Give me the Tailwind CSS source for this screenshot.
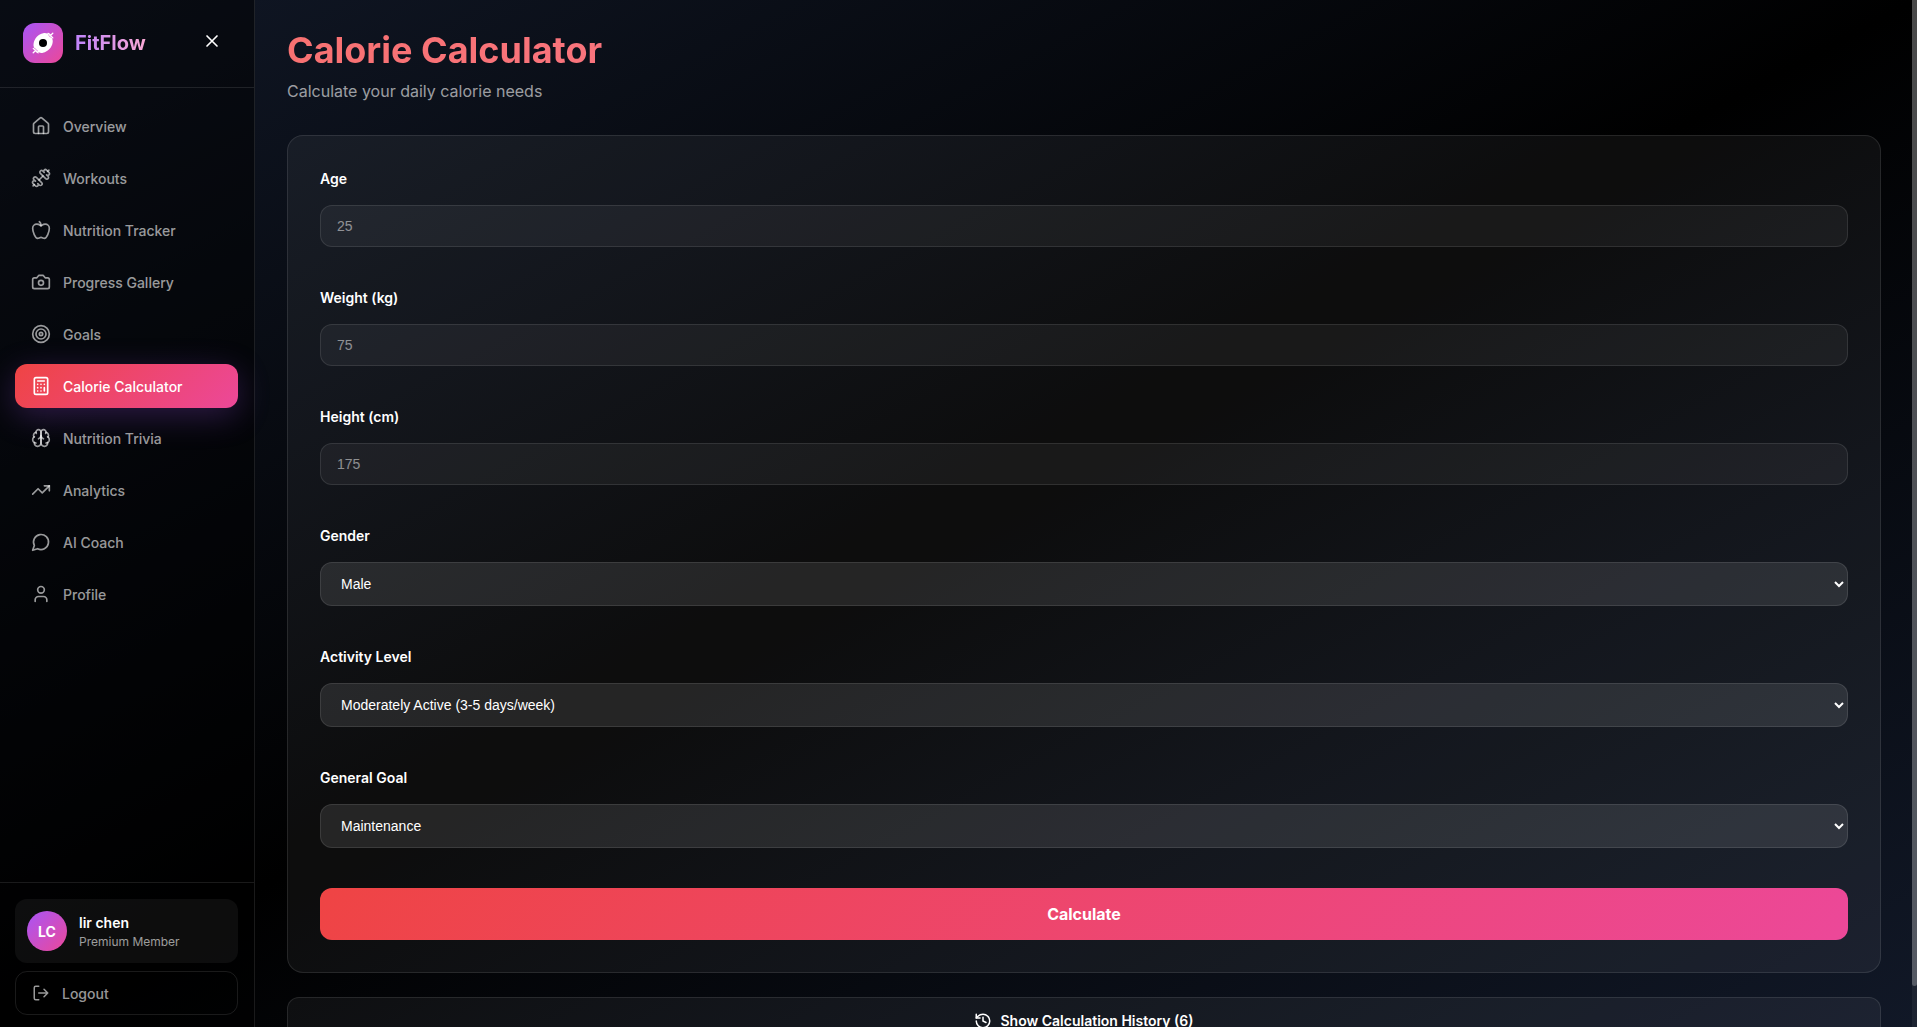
<!DOCTYPE html>
<html lang="en">
<head>
<meta charset="utf-8">
<meta name="viewport" content="width=device-width, initial-scale=1">
<title>FitFlow – Calorie Calculator</title>
<script src="https://cdn.jsdelivr.net/npm/@tailwindcss/browser@4"></script>
</head>
<body class="flex h-screen overflow-hidden bg-black bg-linear-to-br/srgb from-[#111827] via-black to-[#111827] font-[Inter,sans-serif] text-white">

<svg class="hidden" aria-hidden="true">
  <symbol id="dumbbell" viewBox="0 0 24 24"><path d="M17.596 12.768a2 2 0 1 0 2.829-2.829l-1.768-1.767a2 2 0 0 0 2.828-2.829l-2.828-2.828a2 2 0 0 0-2.829 2.828l-1.767-1.768a2 2 0 1 0-2.829 2.829z"/><path d="m2.5 21.5 1.4-1.4"/><path d="m20.1 3.9 1.4-1.4"/><path d="M5.343 21.485a2 2 0 1 0 2.829-2.828l1.767 1.768a2 2 0 1 0 2.829-2.829l-6.364-6.364a2 2 0 1 0-2.829 2.829l1.768 1.767a2 2 0 0 0-2.828 2.829z"/><path d="m9.6 14.4 4.8-4.8"/></symbol>
</svg>

<aside class="flex h-full w-[255px] shrink-0 flex-col border-r border-white/10 bg-black/50">
  <div class="flex items-center border-b border-white/10 py-6 pr-6 pl-[23px] -mt-px">
    <div class="flex size-10 items-center justify-center rounded-xl bg-linear-to-br/srgb from-[#a855f7] to-[#ec4899]">
      <svg class="size-6" viewBox="0 0 24 24" fill="none" stroke="#fff" stroke-width="2" stroke-linecap="round" stroke-linejoin="round" aria-hidden="true">
        <path d="m2.2 21.8 1.6-1.6m16.4-16.4 1.6-1.6M2.300 17.400l1.600 1.400 1.500 1.800 1.700 1.200M17 2.400l1.800 1 1.400 1.700 1.600 1.800" stroke-width="1.3"/>
        <path d="M12.200 2.200c2-.7 4.600 0 6.500 1.900 2.700 2.600 3.500 5.500 2.900 7.700-.7 4.600-4.500 9-9.600 9.900-2 .5-4.900 0-6.700-1.900-2.400-2.400-3.200-5-2.700-7.200C3.300 7.500 7.400 3.100 12.200 2.200Z" fill="#fff" stroke="none"/>
        <path d="m17.600 4.200 2.300 2.300M4.100 17.500l2.300 2.300" stroke="#d14fc4" stroke-width=".7" stroke-dasharray="1 1"/>
        <circle cx="12" cy="12" r="4" fill="#000" stroke="none"/>
      </svg>
    </div>
    <span class="ml-3 bg-linear-to-r/srgb from-[#c084fc] to-[#f9a8d4] bg-clip-text text-xl font-bold text-transparent">FitFlow</span>
    <button type="button" aria-label="Close menu" class="mr-0.5 mb-1 ml-auto flex size-8 items-center justify-center">
      <svg class="size-5" viewBox="0 0 24 24" fill="none" stroke="currentColor" stroke-width="2" stroke-linecap="round"><path d="M18 6 6 18M6 6l12 12"/></svg>
    </button>
  </div>

  <nav class="flex flex-1 flex-col gap-2 py-4 pr-4 pl-[15px] text-sm leading-[21px] font-medium text-white/60 [&_a]:flex [&_a]:h-11 [&_a]:items-center [&_a]:gap-3 [&_a]:rounded-xl [&_a]:px-4 [&_svg]:size-5 [&_svg]:shrink-0 [&_svg]:fill-none [&_svg]:stroke-current [&_svg]:stroke-2 [&_svg]:[stroke-linecap:round] [&_svg]:[stroke-linejoin:round]">
    <a href="#"><svg viewBox="0 0 24 24"><path d="M15 21v-8a1 1 0 0 0-1-1h-4a1 1 0 0 0-1 1v8"/><path d="M3 10a2 2 0 0 1 .709-1.528l7-5.999a2 2 0 0 1 2.582 0l7 5.999A2 2 0 0 1 21 10v9a2 2 0 0 1-2 2H5a2 2 0 0 1-2-2z"/></svg>Overview</a>
    <a href="#"><svg><use href="#dumbbell"/></svg>Workouts</a>
    <a href="#"><svg viewBox="0 0 24 24"><path d="M12 20.94c1.5 0 2.75 1.06 4 1.06 3 0 6-8 6-12.22A4.91 4.91 0 0 0 17 5c-2.22 0-4 1.44-5 2-1-.56-2.78-2-5-2a4.9 4.9 0 0 0-5 4.78C2 14 5 22 8 22c1.250 0 2.500-1.060 4-1.060Z"/><path d="M10 2c1 .5 2 2 2 5"/></svg>Nutrition Tracker</a>
    <a href="#"><svg viewBox="0 0 24 24"><path d="M14.500 4h-5L7 7H4a2 2 0 0 0-2 2v9a2 2 0 0 0 2 2h16a2 2 0 0 0 2-2V9a2 2 0 0 0-2-2h-3l-2.500-3z"/><circle cx="12" cy="13" r="3"/></svg>Progress Gallery</a>
    <a href="#"><svg viewBox="0 0 24 24"><circle cx="12" cy="12" r="10"/><circle cx="12" cy="12" r="6"/><circle cx="12" cy="12" r="2"/></svg>Goals</a>
    <a href="#" aria-current="page" class="bg-linear-135/srgb from-[#ef4444] to-[#ec4899] text-white shadow-[0_8px_32px_rgba(168,85,247,0.25)]"><svg viewBox="0 0 24 24"><rect width="16" height="20" x="4" y="2" rx="2"/><path d="M8 6h8M16 14v4M16 10h.01M12 10h.01M8 10h.01M12 14h.01M8 14h.01M12 18h.01M8 18h.01"/></svg>Calorie Calculator</a>
    <a href="#"><svg viewBox="0 0 24 24"><path d="M12 5a3 3 0 1 0-5.997.125 4 4 0 0 0-2.526 5.770 4 4 0 0 0 .556 6.588A4 4 0 1 0 12 18Z"/><path d="M12 5a3 3 0 1 1 5.997.125 4 4 0 0 1 2.526 5.770 4 4 0 0 1-.556 6.588A4 4 0 1 1 12 18Z"/><path d="M15 13a4.500 4.500 0 0 1-3-4 4.500 4.500 0 0 1-3 4"/><path d="M17.599 6.500a3 3 0 0 0 .399-1.375M6.003 5.125A3 3 0 0 0 6.401 6.500M3.477 10.896a4 4 0 0 1 .585-.396M19.938 10.500a4 4 0 0 1 .585.396M6 18a4 4 0 0 1-1.967-.516M19.967 17.484A4 4 0 0 1 18 18"/></svg>Nutrition Trivia</a>
    <a href="#"><svg viewBox="0 0 24 24"><path d="m22 7-8.500 8.500-5-5L2 17"/><path d="M16 7h6v6"/></svg>Analytics</a>
    <a href="#"><svg viewBox="0 0 24 24"><path d="M7.900 20A9 9 0 1 0 4 16.100L2 22Z"/></svg>AI Coach</a>
    <a href="#"><svg viewBox="0 0 24 24"><path d="M19 21v-2a4 4 0 0 0-4-4H9a4 4 0 0 0-4 4v2"/><circle cx="12" cy="7" r="4"/></svg>Profile</a>
  </nav>

  <div class="flex flex-col gap-2 border-t border-white/10 pt-4 pr-4 pb-3 pl-[15px]">
    <div class="flex h-16 items-center gap-3 rounded-xl bg-white/5 px-3">
      <div class="flex size-10 items-center justify-center rounded-full bg-linear-to-br/srgb from-[#a855f7] to-[#ec4899] text-sm leading-[21px] font-bold">LC</div>
      <div>
        <p class="text-sm leading-[21px] font-semibold">lir chen</p>
        <p class="text-xs leading-[17px] text-white/60">Premium Member</p>
      </div>
    </div>
    <button type="button" class="flex h-11 items-center gap-3 rounded-xl border border-white/10 px-4 text-sm leading-[21px] font-medium text-white/60">
      <svg class="size-[18px]" viewBox="0 0 24 24" fill="none" stroke="currentColor" stroke-width="2" stroke-linecap="round" stroke-linejoin="round"><path d="M9 21H5a2 2 0 0 1-2-2V5a2 2 0 0 1 2-2h4M16 17l5-5-5-5M21 12H9"/></svg>
      Logout
    </button>
  </div>
</aside>

<main class="h-full min-w-0 flex-1 overflow-hidden px-8 pt-8 pr-[31px]">
  <h1 class="mb-2.5 bg-linear-135/srgb from-[#f87171] to-[#fb7fa8] bg-clip-text text-4xl leading-[37px] font-bold text-transparent">Calorie Calculator</h1>
  <p class="mb-8 text-base leading-6 text-white/60">Calculate your daily calorie needs</p>

  <form class="flex flex-col gap-10 rounded-2xl border border-white/10 bg-white/5 p-8 [&_input]:h-[42px] [&_input]:w-full [&_input]:rounded-xl [&_input]:border [&_input]:border-white/10 [&_input]:bg-white/5 [&_input]:px-4 [&_input]:font-['Liberation_Sans',Arial,sans-serif] [&_input]:text-sm [&_input]:placeholder:text-white/50 [&_label]:text-sm [&_label]:leading-[21px] [&_label]:font-semibold [&_select]:h-11 [&_select]:w-full [&_select]:rounded-xl [&_select]:border [&_select]:border-white/10 [&_select]:bg-white/10 [&_select]:px-4 [&_select]:font-['Liberation_Sans',Arial,sans-serif] [&_select]:text-sm [&>div]:flex [&>div]:flex-col [&>div]:gap-4">
    <div><label for="age">Age</label><input id="age" type="text" inputmode="numeric" placeholder="25"></div>
    <div><label for="weight">Weight (kg)</label><input id="weight" type="text" inputmode="numeric" placeholder="75"></div>
    <div><label for="height">Height (cm)</label><input id="height" type="text" inputmode="numeric" placeholder="175"></div>
    <div><label for="gender">Gender</label><select id="gender"><option>Male</option><option>Female</option></select></div>
    <div><label for="activity">Activity Level</label><select id="activity"><option>Moderately Active (3-5 days/week)</option></select></div>
    <div><label for="goal">General Goal</label><select id="goal"><option>Maintenance</option></select></div>
    <button type="submit" class="h-[52px] rounded-xl bg-linear-135/srgb from-[#ef4444] to-[#ec4899] text-base font-bold">Calculate</button>
  </form>

  <button type="button" class="mt-6 flex h-12 w-full items-center justify-center gap-2 rounded-xl border border-white/10 bg-white/5 text-sm font-semibold">
    <svg class="size-[18px]" viewBox="0 0 24 24" fill="none" stroke="currentColor" stroke-width="2" stroke-linecap="round" stroke-linejoin="round"><path d="M3 12a9 9 0 1 0 9-9 9.750 9.750 0 0 0-6.740 2.740L3 8"/><path d="M3 3v5h5M12 7v5l4 2"/></svg>
    Show Calculation History (6)
  </button>
</main>

<div class="h-full w-[5px] shrink-0 bg-white/5" aria-hidden="true">
  <div class="h-[96%] rounded-b-sm bg-white/25"></div>
</div>

</body>
</html>
